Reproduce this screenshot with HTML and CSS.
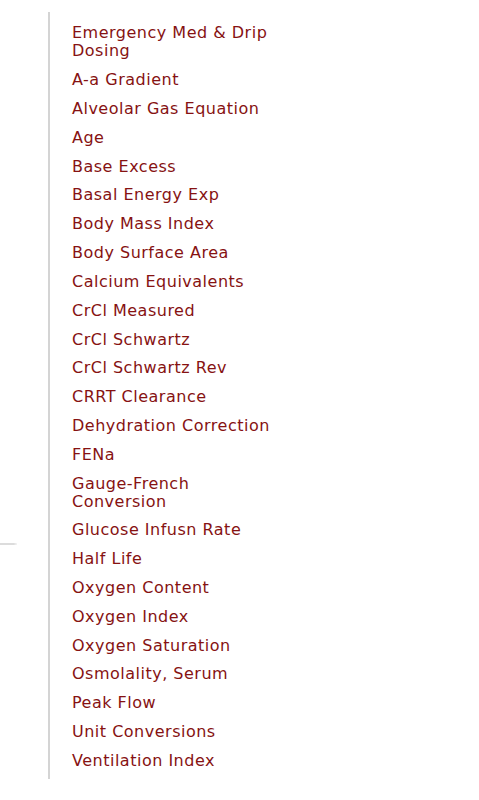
FILE: index.html
```html
<!DOCTYPE html>
<html>
<head>
<meta charset="utf-8">
<link rel="stylesheet" href="styles.css">
</head>
<body>
<div class="page">
  <div class="side">
    <div class="side-bar"></div>
  </div>
  <nav class="menu">
    <a class="item">Emergency Med &amp; Drip Dosing</a>
    <a class="item">A-a Gradient</a>
    <a class="item">Alveolar Gas Equation</a>
    <a class="item">Age</a>
    <a class="item">Base Excess</a>
    <a class="item">Basal Energy Exp</a>
    <a class="item">Body Mass Index</a>
    <a class="item">Body Surface Area</a>
    <a class="item">Calcium Equivalents</a>
    <a class="item">CrCl Measured</a>
    <a class="item">CrCl Schwartz</a>
    <a class="item">CrCl Schwartz Rev</a>
    <a class="item">CRRT Clearance</a>
    <a class="item">Dehydration Correction</a>
    <a class="item">FENa</a>
    <a class="item">Gauge-French Conversion</a>
    <a class="item">Glucose Infusn Rate</a>
    <a class="item">Half Life</a>
    <a class="item">Oxygen Content</a>
    <a class="item">Oxygen Index</a>
    <a class="item">Oxygen Saturation</a>
    <a class="item">Osmolality, Serum</a>
    <a class="item">Peak Flow</a>
    <a class="item">Unit Conversions</a>
    <a class="item">Ventilation Index</a>
  </nav>
</div>
</body>
</html>
```
FILE: styles.css
```css
html, body {
  margin: 0;
  padding: 0;
  background: #ffffff;
}
.page {
  display: flex;
  align-items: flex-start;
  font-family: "DejaVu Sans", Verdana, sans-serif;
}
.side {
  width: 48px;
  flex: none;
  padding-top: 543px;
}
.side-bar {
  width: 17px;
  height: 2px;
  background: linear-gradient(to right, #dcdcdc 80%, #f4f4f4);
}
.menu {
  margin-top: 12px;
  border-left: 2px solid #d4d4d4;
  padding: 7px 0 4px 22px;
  width: 203px;
  display: flex;
  flex-direction: column;
}
.item {
  display: block;
  color: #861212;
  font-size: 16px;
  line-height: 18px;
  letter-spacing: 0.5px;
  padding: 5.42px 0;
  text-decoration: none;
}
```
